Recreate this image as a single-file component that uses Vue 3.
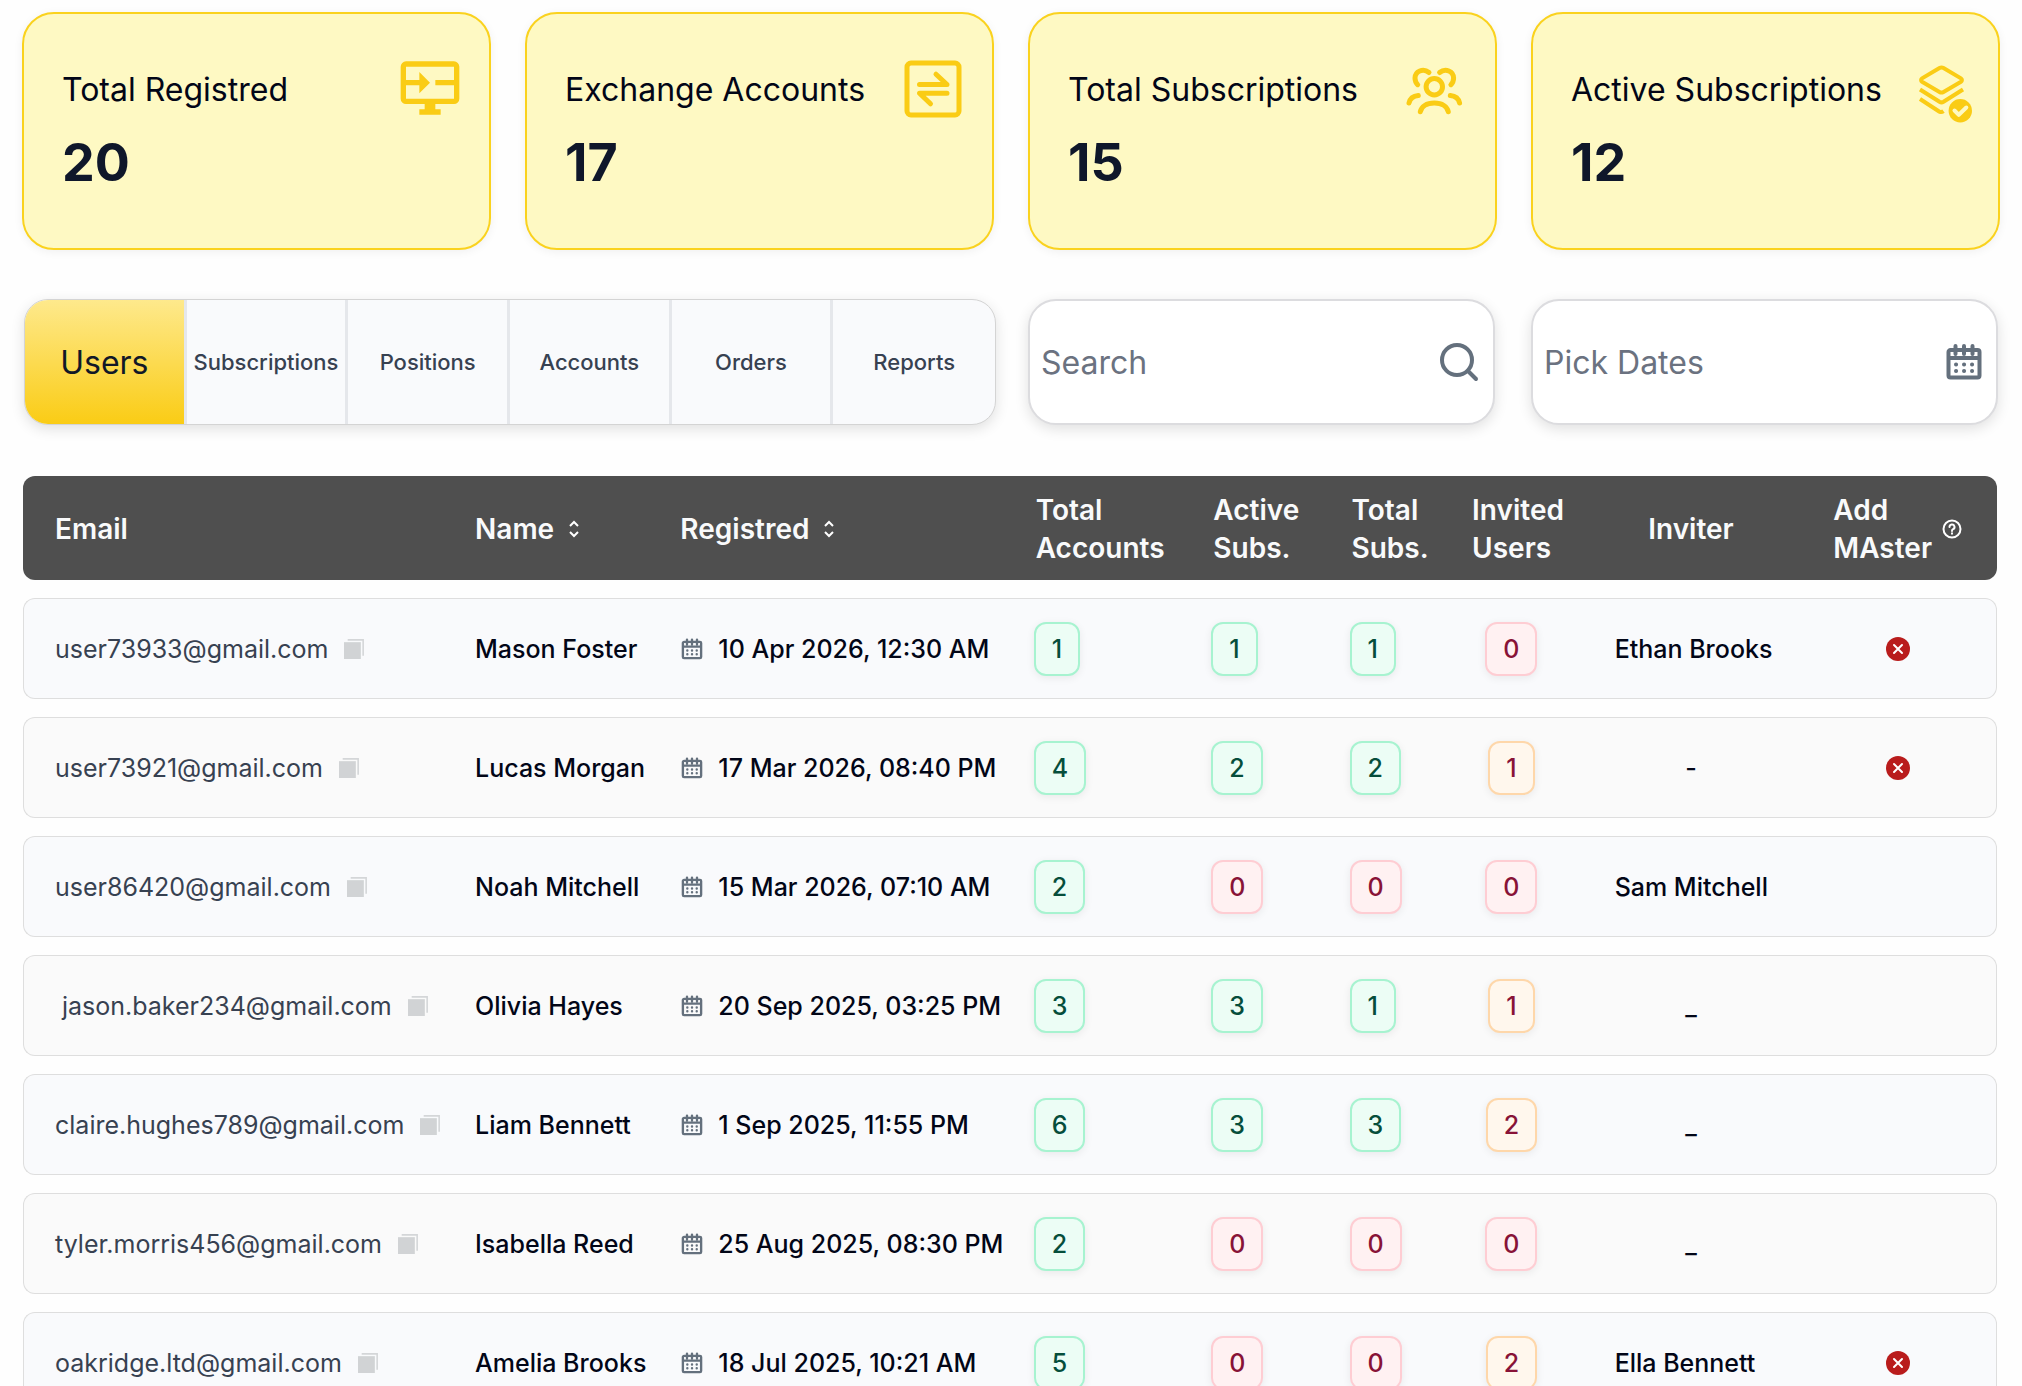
<template>
  <main class="dashboard">
    <section class="stats">
      <article v-for="stat in stats" :key="stat.label" class="stat-card">
        <div class="stat-text">
          <h2 class="stat-label">{{ stat.label }}</h2>
          <p class="stat-value">{{ stat.value }}</p>
        </div>

        <svg v-if="stat.icon === 'monitor'" class="stat-icon" viewBox="0 0 24 24" aria-hidden="true">
          <rect x="2" y="3" width="20" height="14" rx="1" fill="none" stroke="currentColor" stroke-width="2" />
          <path fill="currentColor" d="M10 17h4v3h2v2H8v-2h2zM3 9h5V6l4 4-4 4v-3H3zM14 9h7v2h-7z" />
        </svg>
        <svg v-else-if="stat.icon === 'exchange'" class="stat-icon line" viewBox="0 0 64 64" aria-hidden="true">
          <rect x="6" y="7" width="52" height="52" rx="4" />
          <path d="M18.5 28.500H46L35 18.200M46 37.200H18.500l11 10.600" />
        </svg>
        <svg v-else-if="stat.icon === 'people'" class="stat-icon line" viewBox="0 0 64 64" aria-hidden="true">
          <circle cx="30.3" cy="30.7" r="8.2" />
          <path d="M16.3 55.7c1-5 6-8.7 14-8.7s13 3.7 14 8.7" />
          <path d="M25 16.5c-6-5-14-1-14 5.500c0 3 1 5 2.700 6.700M14.300 39.500C9.500 40 6 42.500 5 47" />
          <path d="M35.600 16.500c6-5 14-1 14 5.500c0 3-1 5-2.700 6.700M46.300 39.500c4.800.5 8.300 3 9.300 7.500" />
        </svg>
        <svg v-else class="stat-icon line" viewBox="0 0 64 64" aria-hidden="true">
          <path class="thin" d="M32.500 12a4 4 0 0 1 4 0L54 22.400a2 2 0 0 1 0 3.400L36.500 36a4 4 0 0 1-4 0L15 25.800a2 2 0 0 1 0-3.400z" />
          <path class="thin" d="M13 33.500l19.500 12.300a4 4 0 0 0 4 0L56 33.500M13 43l19.500 12.700q2 1 4-.5" />
          <circle class="dot" cx="53.300" cy="54.700" r="11.700" />
          <path class="check" d="M47.500 54.500l4.300 4.300 7.500-7.300" />
        </svg>
      </article>
    </section>

    <section class="toolbar">
      <nav class="tabs">
        <button
          v-for="tab in tabs"
          :key="tab"
          type="button"
          class="tab"
          :class="{ active: tab === activeTab }"
          @click="activeTab = tab"
        >
          {{ tab }}
        </button>
      </nav>

      <label class="field">
        <input v-model="searchQuery" type="text" placeholder="Search" aria-label="Search" class="field-input" />
        <svg class="search-icon" viewBox="0 0 38 38" aria-hidden="true">
          <circle cx="17" cy="17" r="15" />
          <path d="M28 28l8 8" />
        </svg>
      </label>

      <label class="field">
        <input v-model="dates" type="text" placeholder="Pick Dates" aria-label="Pick Dates" class="field-input" />
        <svg class="date-icon" viewBox="0 0 34 34" aria-hidden="true">
          <path d="M3.500 5h27a2 2 0 0 1 2 2v23.500a2 2 0 0 1-2 2h-27a2 2 0 0 1-2-2V7a2 2 0 0 1 2-2zM1.500 13h31M8.500 1v8M17 1v8M25.500 1v8" />
          <path class="dots" d="M9 19.500h.1M17 19.500h.1M25 19.500h.1M9 26h.1M17 26h.1M25 26h.1" />
        </svg>
      </label>
    </section>

    <table class="users">
      <colgroup>
        <col class="col-email" />
        <col class="col-name" />
        <col class="col-date" />
        <col class="col-accounts" />
        <col class="col-active" />
        <col class="col-subs" />
        <col class="col-invited" />
        <col class="col-inviter" />
        <col class="col-master" />
      </colgroup>
      <thead>
        <tr>
          <th class="email">Email</th>
          <th>
            <button type="button" class="sort" @click="sortBy('name')">
              Name
              <svg class="sort-icon" viewBox="0 0 12 18" aria-hidden="true"><path d="M2 6l4-4 4 4M2 12l4 4 4-4" /></svg>
            </button>
          </th>
          <th>
            <button type="button" class="sort" @click="sortBy('registered')">
              Registred
              <svg class="sort-icon" viewBox="0 0 12 18" aria-hidden="true"><path d="M2 6l4-4 4 4M2 12l4 4 4-4" /></svg>
            </button>
          </th>
          <th class="head-count">Total<br />Accounts</th>
          <th class="head-count">Active<br />Subs.</th>
          <th class="head-count">Total<br />Subs.</th>
          <th class="head-invited">Invited<br />Users</th>
          <th class="centered">Inviter</th>
          <th class="head-master">
            <div class="master-label">
              <span>Add<br />MAster</span>
              <svg class="help-icon" viewBox="0 0 20 20" aria-hidden="true">
                <circle cx="10" cy="10" r="8.500" />
                <path d="M7.500 8a2.500 2.500 0 1 1 3.600 2.200c-.8.400-1.100.9-1.100 1.800M10 14.200v.6" />
              </svg>
            </div>
          </th>
        </tr>
      </thead>
      <tbody>
        <tr v-for="user in users" :key="user.email">
          <td class="email">
            <div class="cell">
              <span class="email-text">{{ user.email }}</span>
              <button type="button" class="copy" aria-label="Copy email" @click="copyEmail(user.email)">
                <svg class="small-icon" viewBox="0 0 19 19" aria-hidden="true">
                  <path fill="#d1d3d5" d="M0 3h16v16H0z" />
                  <path fill="none" stroke="#d4d6d8" stroke-width="1.500" d="M3.500.8h14.700v15" />
                </svg>
              </button>
            </div>
          </td>
          <td class="name">{{ user.name }}</td>
          <td>
            <div class="cell date">
              <svg class="small-icon calendar" viewBox="0 0 34 34" aria-hidden="true">
                <path d="M3.500 5h27a2 2 0 0 1 2 2v23.500a2 2 0 0 1-2 2h-27a2 2 0 0 1-2-2V7a2 2 0 0 1 2-2zM1.500 13h31M8.500 1v8M17 1v8M25.500 1v8" />
                <path class="dots" d="M9 19.500h.1M17 19.500h.1M25 19.500h.1M9 26h.1M17 26h.1M25 26h.1" />
              </svg>
              {{ user.registered }}
            </div>
          </td>
          <td><span class="badge" :class="countClass(user.accounts)">{{ user.accounts }}</span></td>
          <td><span class="badge" :class="countClass(user.activeSubs)">{{ user.activeSubs }}</span></td>
          <td><span class="badge" :class="countClass(user.totalSubs)">{{ user.totalSubs }}</span></td>
          <td class="centered">
            <span class="badge" :class="user.invited ? 'orange' : 'red'">{{ user.invited }}</span>
          </td>
          <td :class="user.inviter.length > 1 ? 'inviter' : 'centered'">{{ user.inviter }}</td>
          <td class="master">
            <button v-if="user.removable" type="button" class="remove" aria-label="Remove master">
              <svg viewBox="0 0 24 24" aria-hidden="true">
                <circle cx="12" cy="12" r="12" fill="#b91c1c" />
                <path d="M8 8l8 8M16 8l-8 8" stroke="#fff" stroke-width="2" stroke-linecap="round" />
              </svg>
            </button>
          </td>
        </tr>
      </tbody>
    </table>
  </main>
</template>

<script setup>
import { ref } from 'vue'

const stats = [
  { label: 'Total Registred', value: 20, icon: 'monitor' },
  { label: 'Exchange Accounts', value: 17, icon: 'exchange' },
  { label: 'Total Subscriptions', value: 15, icon: 'people' },
  { label: 'Active Subscriptions', value: 12, icon: 'layers' }
]

const tabs = ['Users', 'Subscriptions', 'Positions', 'Accounts', 'Orders', 'Reports']
const activeTab = ref('Users')
const searchQuery = ref('')
const dates = ref('')

const users = ref([
  { email: 'user73933@gmail.com', name: 'Mason Foster', registered: '10 Apr 2026, 12:30 AM', accounts: 1, activeSubs: 1, totalSubs: 1, invited: 0, inviter: 'Ethan Brooks', removable: true },
  { email: 'user73921@gmail.com', name: 'Lucas Morgan', registered: '17 Mar 2026, 08:40 PM', accounts: 4, activeSubs: 2, totalSubs: 2, invited: 1, inviter: '-', removable: true },
  { email: 'user86420@gmail.com', name: 'Noah Mitchell', registered: '15 Mar 2026, 07:10 AM', accounts: 2, activeSubs: 0, totalSubs: 0, invited: 0, inviter: 'Sam Mitchell', removable: false },
  { email: ' jason.baker234@gmail.com', name: 'Olivia Hayes', registered: '20 Sep 2025, 03:25 PM', accounts: 3, activeSubs: 3, totalSubs: 1, invited: 1, inviter: '_', removable: false },
  { email: 'claire.hughes789@gmail.com', name: 'Liam Bennett', registered: '1 Sep 2025, 11:55 PM', accounts: 6, activeSubs: 3, totalSubs: 3, invited: 2, inviter: '_', removable: false },
  { email: 'tyler.morris456@gmail.com', name: 'Isabella Reed', registered: '25 Aug 2025, 08:30 PM', accounts: 2, activeSubs: 0, totalSubs: 0, invited: 0, inviter: '_', removable: false },
  { email: 'oakridge.ltd@gmail.com', name: 'Amelia Brooks', registered: '18 Jul 2025, 10:21 AM', accounts: 5, activeSubs: 0, totalSubs: 0, invited: 2, inviter: 'Ella Bennett', removable: true }
])

const countClass = (count) => (count > 0 ? 'green' : 'red')

const sortBy = (key) => {
  const value = (user) => (key === 'registered' ? Date.parse(user.registered) : user.name)
  users.value.sort((a, b) => (value(a) > value(b) ? 1 : -1))
}

const copyEmail = (email) => {
  navigator.clipboard?.writeText(email.trim())
}
</script>

<style>
body {
  margin: 0;
  background: #fefefe;
  overflow: hidden;
}
</style>

<style scoped>
.dashboard {
  height: 100vh;
  box-sizing: border-box;
  overflow: hidden;
  padding: 12px 22px 0;
  font-family: Inter, "Liberation Sans", sans-serif;
  color: #020617;
}

button {
  padding: 0;
  border: none;
  background: transparent;
  font: inherit;
  color: inherit;
  cursor: pointer;
}

svg {
  display: block;
  overflow: visible;
}

.stats,
.toolbar {
  display: grid;
  grid-template-columns: repeat(4, 1fr);
  gap: 34px;
}

.stat-card {
  display: flex;
  justify-content: space-between;
  box-sizing: border-box;
  min-height: 238px;
  padding: 42px 27px 42px 38px;
  background: #fef9c3;
  border: 2px solid #fad21e;
  border-radius: 32px;
  box-shadow: 0 2px 10px rgba(0, 0, 0, 0.06);
}

.stat-label {
  margin: 12px 0 0;
  font-size: 32px;
  line-height: 44px;
  font-weight: 400;
  white-space: nowrap;
}

.stat-value {
  margin: 20px 0 0;
  font-size: 52px;
  line-height: 62px;
  font-weight: 700;
  color: #0f172a;
}

.stat-icon {
  flex-shrink: 0;
  width: 64px;
  height: 64px;
  color: #facc15;
}

.line {
  fill: none;
  stroke: currentColor;
  stroke-width: 5;
  stroke-linecap: round;
  stroke-linejoin: round;
}

.line .thin {
  stroke-width: 4;
  stroke-linecap: butt;
}

.line .dot {
  fill: currentColor;
  stroke: none;
}

.line .check {
  stroke: #fef9c3;
  stroke-width: 4;
}

.toolbar {
  margin-top: 49px;
}

.tabs {
  grid-column: span 2;
  display: grid;
  grid-template-columns: repeat(6, 1fr);
  margin: 0 -2px 0 2px;
  overflow: hidden;
  border: 1px solid #d4d4d4;
  border-radius: 24px;
  background: #f9fafc;
  box-shadow: 0 4px 14px rgba(0, 0, 0, 0.12);
}

.tab {
  min-width: 0;
  font-size: 22px;
  font-weight: 500;
  color: #374151;
  border-right: 3px solid #e5e7eb;
}

.tab:last-child {
  border-right: none;
}

.tab.active {
  font-size: 32px;
  font-weight: 400;
  color: #111827;
  background: linear-gradient(#fee98c, #facc15);
}

.field {
  display: flex;
  align-items: center;
  box-sizing: border-box;
  min-width: 0;
  height: 126px;
  margin-right: 2px;
  padding: 0 15px 0 11px;
  background: #fff;
  border: 2px solid #dcdcdf;
  border-radius: 28px;
  box-shadow: 0 4px 14px rgba(0, 0, 0, 0.12);
}

.field-input {
  flex: 1;
  min-width: 0;
  padding: 0;
  border: none;
  outline: none;
  background: transparent;
  font-family: inherit;
  font-size: 32px;
  color: #374151;
}

.field-input::placeholder {
  color: #6b7280;
  opacity: 1;
}

.search-icon {
  width: 38px;
  height: 38px;
  fill: none;
  stroke: #64707d;
  stroke-width: 4;
  stroke-linecap: round;
}

.date-icon,
.calendar {
  fill: none;
  stroke: #64707d;
  stroke-width: 4;
  stroke-linecap: round;
}

.date-icon {
  width: 34px;
  height: 34px;
}

.users {
  width: calc(100% - 4px);
  margin: 33px 3px 0 1px;
  table-layout: fixed;
  border-collapse: separate;
  border-spacing: 0 18px;
}

.col-email { width: 22.9%; }
.col-name { width: 10.4%; }
.col-date { width: 17.9%; }
.col-accounts { width: 9%; }
.col-active { width: 7%; }
.col-subs { width: 5.4%; }
.col-invited { width: 5.6%; }
.col-inviter { width: 12.6%; }
.col-master { width: 9.2%; }

th,
td {
  box-sizing: border-box;
  padding: 0;
  text-align: left;
  white-space: nowrap;
}

th {
  height: 104px;
  padding-top: 2px;
  background: #4f4f4f;
  color: #f9fafb;
  font-size: 28px;
  line-height: 38px;
  font-weight: 600;
}

td {
  height: 101px;
  background: #f9fafc;
  border: solid #dedede;
  border-width: 1px 0;
  font-size: 25px;
  line-height: 36px;
  font-weight: 500;
}

tbody tr:nth-child(even) td {
  background: #fafafa;
}

th:first-child {
  border-radius: 12px 0 0 12px;
}

th:last-child {
  border-radius: 0 12px 12px 0;
}

td:first-child {
  border-left-width: 1px;
  border-radius: 12px 0 0 12px;
}

td:last-child {
  border-right-width: 1px;
  border-radius: 0 12px 12px 0;
}

.email {
  padding-left: 32px;
}

td.email {
  padding-left: 31px;
  font-weight: 400;
  color: #374151;
}

.cell {
  display: flex;
  align-items: center;
  gap: 16px;
}

.email-text {
  white-space: pre;
}

.small-icon {
  width: 20px;
  height: 20px;
}

.date {
  padding-left: 2px;
}

.sort {
  display: flex;
  align-items: center;
  gap: 14px;
}

.sort-icon {
  width: 12px;
  height: 18px;
  fill: none;
  stroke: #fff;
  stroke-width: 2;
}

.head-count {
  padding-left: 2px;
}

.head-invited {
  padding-left: 16px;
}

.centered {
  text-align: center;
}

.inviter {
  padding-left: 48px;
}

.head-master {
  padding-left: 18px;
}

.master-label {
  display: flex;
  align-items: center;
  gap: 10px;
}

.help-icon {
  width: 20px;
  height: 20px;
  fill: none;
  stroke: #fff;
  stroke-width: 2;
  stroke-linecap: round;
}

.badge {
  display: block;
  width: fit-content;
  padding: 7px 16px;
  border: 2px solid;
  border-radius: 12px;
  box-shadow: 0 2px 8px rgba(0, 0, 0, 0.07);
}

.centered .badge {
  margin: 0 auto;
}

.green {
  color: #064e3b;
  background: #ecfdf5;
  border-color: #a7f3d0;
}

.red {
  color: #881337;
  background: #fff1f2;
  border-color: #fecdd3;
}

.orange {
  color: #881337;
  background: #fff7ed;
  border-color: #fed7aa;
}

.master {
  padding-left: 71px;
}

.remove {
  display: block;
  width: 24px;
  height: 24px;
}
</style>
